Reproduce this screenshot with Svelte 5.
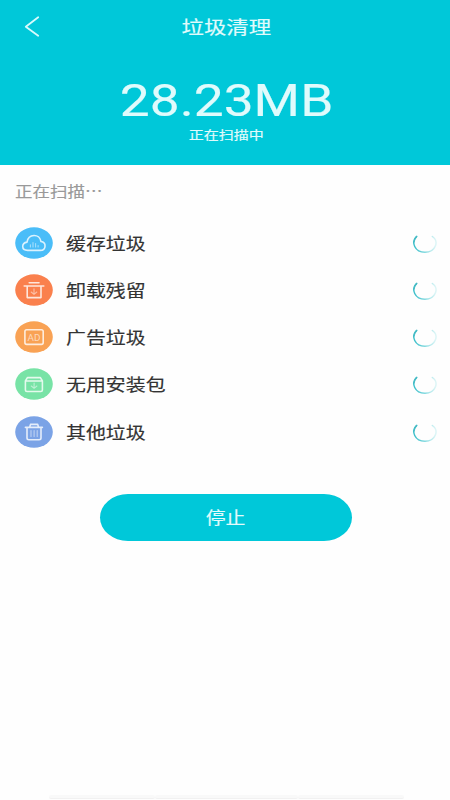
<script>
  const items = [
    { label: '缓存垃圾', color: '#4abdf8', icon: 'cloud' },
    { label: '卸载残留', color: '#fa804d', icon: 'bin' },
    { label: '广告垃圾', color: '#f9a254', icon: 'ad' },
    { label: '无用安装包', color: '#78e3a6', icon: 'box' },
    { label: '其他垃圾', color: '#7ba3e6', icon: 'trash' }
  ];
</script>

<main>
  <header>
    <div class="bar">
      <svg class="back" width="16" height="22" viewBox="0 0 16 22"><path d="M14.2 1.3 1.8 10.7 14.2 19.7" /></svg>
      <h1><span class="wide">垃圾清理</span></h1>
    </div>
    <div class="size"><span class="wide">28.23MB</span></div>
    <div class="state"><span class="wide">正在扫描中</span></div>
  </header>

  <p class="scan"><span class="wide left">正在扫描⋯</span></p>

  <ul>
    {#each items as item}
      <li>
        <svg class="icon" width="38" height="32" viewBox="0 0 38 32">
          <ellipse cx="19" cy="16" rx="18.8" ry="15.8" fill={item.color} />
          <g class="glyph">
            {#if item.icon === 'cloud'}
              <path d="M12.6 23.4C6 23.4 6.4 15.9 12 15.1C13.4 6.4 24.6 6.4 26 14.5C31.6 15.2 31.4 23.4 25.3 23.4Z" />
              <path class="faint" d="M15.4 20v-2.2M18 20v-4.5M20.6 20v-3.4M23.1 20v-1.5" />
            {:else if item.icon === 'bin'}
              <path d="M9.2 12H28.8M14.2 8.8H24M12.2 12V23.6H26V12" />
              <path class="faint" d="M19 14.8v5.5M16.2 18l2.8 2.4 2.8-2.4" />
            {:else if item.icon === 'ad'}
              <rect x="9.9" y="8.8" width="18.3" height="14.6" rx="1.8" />
              <text x="19.1" y="19.5" textLength="13" lengthAdjust="spacingAndGlyphs">AD</text>
            {:else if item.icon === 'box'}
              <path d="M10.4 13 12.4 9.6H25.4L27.4 13V22Q27.4 23.5 25.8 23.5H12Q10.4 23.5 10.4 22ZM10.4 13H27.4" />
              <path class="faint" d="M19.1 15v5.2M16.3 18l2.8 2.3 2.8-2.3" />
            {:else}
              <path d="M10.4 11.4H27.4M14.7 11 15.5 8.4H22.7L23.5 11M12 11.4V22Q12 23.7 14 23.7H24Q26 23.7 26 22V11.4" />
              <path class="faint" d="M16 14.5v6M19.1 14.5v6M22.2 14.5v6" />
            {/if}
          </g>
        </svg>
        <span class="label"><span class="wide left">{item.label}</span></span>
        <svg class="spin" width="26" height="22" viewBox="0 0 26 22">
          <defs>
            <linearGradient id="fade-{item.icon}" x1="0" y1="0" x2="1" y2="0">
              <stop offset="0" stop-color="#3dbfca" />
              <stop offset=".4" stop-color="#70d3da" />
              <stop offset=".75" stop-color="#b0e8eb" />
              <stop offset="1" stop-color="#e0f6f7" />
            </linearGradient>
          </defs>
          <path d="M4.3 4.7C-1 10 2.5 20.3 13 20.3C23.5 20.3 27.5 9.5 20.4 4.5" stroke="url(#fade-{item.icon})" />
          <path d="M4.8 4.4Q2.2 6.5 1.9 10" stroke="#45bac4" stroke-width="2" />
        </svg>
      </li>
    {/each}
  </ul>

  <button><span class="wide">停止</span></button>

  <footer><i></i><i></i><i></i></footer>
</main>

<style>
  :global(body) { background: #fefefe; }
  main {
    width: 450px;
    height: 800px;
    overflow: hidden;
    display: flex;
    flex-direction: column;
    font-family: Roboto, "Noto Sans CJK SC", sans-serif;
    background: #fefefe;
    -webkit-text-stroke-width: .15px;
  }
  header {
    height: 165px;
    flex: none;
    background: #00c8d9;
    color: #e0fbfc;
    text-align: center;
  }
  .wide { display: inline-block; transform: scaleX(1.2); white-space: nowrap; }
  .left { transform-origin: left center; }
  .bar { display: grid; grid-template-columns: 60px 1fr 57px; height: 53px; align-items: center; }
  .back { margin-left: 24px; }
  .back path { fill: none; stroke: #d8fafc; stroke-width: 1.8; stroke-linecap: round; stroke-linejoin: round; }
  h1 { margin: 0; padding-top: 2px; font-size: 18.7px; line-height: 28px; font-weight: 400; }
  .size { height: 70px; padding-left: 3px; margin-top: 13px; font-size: 43.7px; line-height: 70px; }
  .size .wide { transform: scaleX(1.22); }
  .state { height: 18px; margin-top: -9px; padding-left: 3px; font-size: 12.5px; line-height: 18px; }
  .scan {
    margin: 15px 0 0 15px;
    height: 22px;
    font-family: "Noto Sans CJK SC", sans-serif;
    font-size: 14.6px;
    line-height: 22px;
    color: #999;
  }
  ul { list-style: none; margin: 17px 0 0; padding: 0; }
  li { display: flex; align-items: center; height: 47.25px; padding: 0 12px 0 15px; }
  .icon { flex: none; }
  .glyph { fill: none; stroke: #fff; stroke-opacity: .8; stroke-width: 1.6; stroke-linejoin: round; stroke-linecap: round; }
  .faint { stroke-opacity: .5; stroke-width: 1.1; }
  .glyph text { fill: #fff; fill-opacity: .6; stroke: none; font: 9.5px Roboto, sans-serif; text-anchor: middle; }
  .label { flex: 1; margin-left: 13px; padding-top: 4px; font-size: 16.6px; line-height: 24px; color: #333; }
  .spin { flex: none; }
  .spin path { fill: none; stroke-width: 1.5; stroke-linecap: round; }
  button {
    width: 252px;
    height: 47px;
    margin: 39px 0 0 100px;
    padding: 2px 0 0;
    border: 0;
    border-radius: 28px / 23.5px;
    background: #00c8d9;
    color: #e2fbfc;
    font: 16.6px/45px Roboto, "Noto Sans CJK SC", sans-serif;
    -webkit-text-stroke-width: .15px;
  }
  footer { display: flex; margin: auto 46px 0 49px; height: 5px; }
  footer i { flex: 1; height: 3px; background: #f9f9f9; border-bottom: 1px solid #f1f1f1; border-radius: 2px; }
  footer i:nth-child(2) { flex: 1.36; }
</style>
